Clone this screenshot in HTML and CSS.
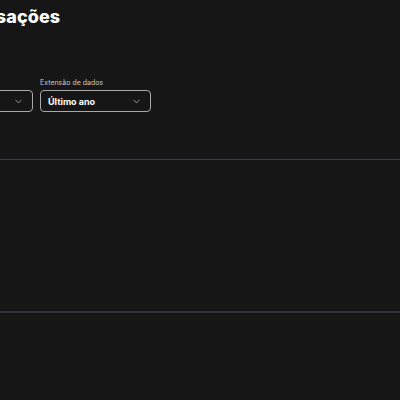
FILE: index.html
```html
<!DOCTYPE html>
<html lang="pt">
<head>
    <meta charset="UTF-8">
    <meta name="viewport" content="width=device-width, initial-scale=1.0">
    <title>Transações</title>
    <link rel="stylesheet" href="styles.css">
</head>
<body>
    <div class="page">
        <h1 class="page-title">Transações</h1>

        <!-- Filters -->
        <div class="filters">
            <div class="field field-type">
                <label class="field-label">Tipo</label>
                <div class="select">
                    <span class="select-value">Todas</span>
                    <svg class="chevron" viewBox="0 0 10 6" width="7" height="5"><path d="M1 1l4 4 4-4" fill="none" stroke="#b0b0b0" stroke-width="1.2" stroke-linecap="round" stroke-linejoin="round"/></svg>
                </div>
            </div>
            <div class="field field-range">
                <label class="field-label">Extensão de dados</label>
                <div class="select">
                    <span class="select-value">Último ano</span>
                    <svg class="chevron" viewBox="0 0 10 6" width="7" height="5"><path d="M1 1l4 4 4-4" fill="none" stroke="#b0b0b0" stroke-width="1.2" stroke-linecap="round" stroke-linejoin="round"/></svg>
                </div>
            </div>
        </div>

        <!-- Chart area -->
        <div class="chart"></div>
    </div>
</body>
</html>
```

FILE: styles.css
```css
* {
    margin: 0;
    padding: 0;
    box-sizing: border-box;
}

body {
    background: #161616;
    color: #fff;
    font-family: Inter, "Open Sans", sans-serif;
    overflow: hidden;
}

.page {
    padding-top: 5px;
}

.page-title {
    margin-left: -45px;
    font-size: 18px;
    line-height: 24px;
    font-weight: 800;
    letter-spacing: 0.1px;
}

.filters {
    display: flex;
    gap: 7px;
    margin-top: 49px;
    margin-left: -46px;
}

.field {
    display: flex;
    flex-direction: column;
    gap: 2px;
}

.field-type {
    width: 79px;
}

.field-range {
    width: 111px;
}

.field-label {
    font-size: 7px;
    line-height: 10px;
    color: #c8c8c8;
}

.select {
    display: flex;
    align-items: center;
    justify-content: space-between;
    height: 22px;
    padding: 0 10px 0 7px;
    border: 1.5px solid #a9a9a9;
    border-radius: 4px;
}

.select-value {
    font-size: 9px;
    font-weight: 700;
}

.chart {
    margin-top: 47px;
    height: 154px;
    border-top: 1px solid #34414d;
    border-bottom: 2px solid #30303c;
}
```
